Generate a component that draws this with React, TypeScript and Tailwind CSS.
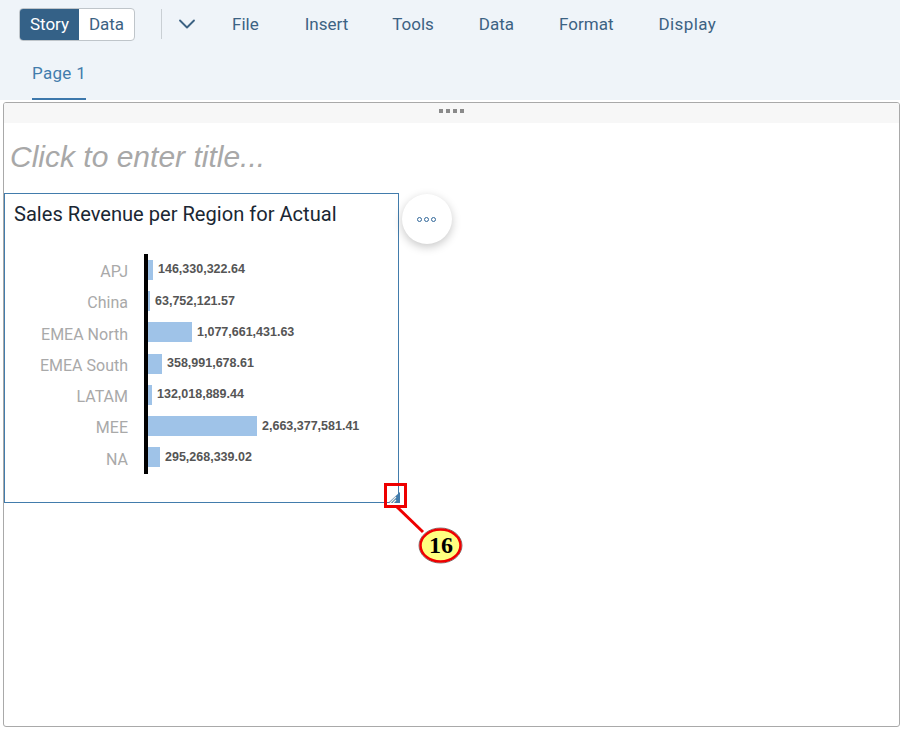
import React from 'react';
import { ChevronDown } from 'lucide-react';

const menuItems = [
  { label: 'File', cls: 'ml-[31px] pt-[2px]' },
  { label: 'Insert', cls: 'ml-[46px] pt-[2px]' },
  { label: 'Tools', cls: 'ml-[44px] pt-[2px]' },
  { label: 'Data', cls: 'ml-[45px] pt-[2px]' },
  { label: 'Format', cls: 'ml-[45px] pt-[2px]' },
  { label: 'Display', cls: 'ml-[45px] pt-[2px] tracking-[0.4px]' },
];

const rows = [
  { region: 'APJ', value: '146,330,322.64', width: 'w-[5px]' },
  { region: 'China', value: '63,752,121.57', width: 'w-[2px]' },
  { region: 'EMEA North', value: '1,077,661,431.63', width: 'w-[44px]' },
  { region: 'EMEA South', value: '358,991,678.61', width: 'w-[14px]' },
  { region: 'LATAM', value: '132,018,889.44', width: 'w-[4px]' },
  { region: 'MEE', value: '2,663,377,581.41', width: 'w-[109px]' },
  { region: 'NA', value: '295,268,339.02', width: 'w-[12px]' },
];

const App: React.FC = () => {
  return (
    <div className="relative h-[731px] w-[900px] overflow-hidden bg-white font-['Roboto',sans-serif]">
      {/* Toolbar */}
      <div className="h-[100px] bg-[#eff4f9]">
        <div className="flex h-[48px] items-center pl-[19px] text-[17px] text-[#3c6283]">
          <div className="flex h-[33px] w-[116px] overflow-hidden rounded-[4px] border border-[#bfc5ca] bg-white">
            <div className="flex w-[59px] items-center justify-center bg-[#346187] pt-[1px] text-white">Story</div>
            <div className="flex flex-1 items-center justify-center pt-[1px]">Data</div>
          </div>
          <div className="ml-[26px] h-[30px] w-px bg-[#c9cfd4]" />
          <ChevronDown className="ml-[11px] h-[28px] w-[28px]" strokeWidth={1.6} />
          {menuItems.map((m) => (
            <span key={m.label} className={m.cls}>{m.label}</span>
          ))}
        </div>
        <div className="ml-[32px] mt-[11px] h-[41px] w-[54px] border-b-[2px] border-[#3d78ac] pt-[1px] text-[17px] leading-[26px] tracking-[0.3px] whitespace-nowrap text-[#427cac]">
          Page 1
        </div>
      </div>

      {/* Canvas */}
      <div className="ml-[3px] mt-[2px] h-[625px] w-[897px] overflow-hidden rounded-[3px] border border-[#a9a9a9]">
        <div className="flex h-[20px] items-center justify-center gap-[3px] bg-[#f7f7f7] pb-[4px]">
          <span className="h-[4px] w-[4px] bg-[#8a8a8a]" />
          <span className="h-[4px] w-[4px] bg-[#8a8a8a]" />
          <span className="h-[4px] w-[4px] bg-[#8a8a8a]" />
          <span className="h-[4px] w-[4px] bg-[#8a8a8a]" />
        </div>
        <div className="pl-[6px] pt-[14px] font-['Liberation_Sans',sans-serif] text-[30px] italic leading-[40px] text-[#a8a8a8]">Click to enter title...</div>

        <div className="mt-[16px] flex items-start">
          {/* Chart widget */}
          <div className="h-[310px] w-[395px] border border-[#427cac] pl-[9px] pt-[7px]">
            <div className="text-[20.1px] leading-[26px] text-[#1a2733]">Sales Revenue per Region for Actual</div>
            <div className="mt-[27px] flex">
              <div className="flex h-[220px] w-[114px] flex-col pt-[2px] text-right text-[16px] leading-[31.3px] text-[#a9a9a9]">
                {rows.map((r) => (
                  <div key={r.region} className="whitespace-nowrap">{r.region}</div>
                ))}
              </div>
              <div className="ml-[16px] flex h-[220px] flex-col border-l-4 border-black">
                {rows.map((r) => (
                  <div key={r.region} className="flex h-[31.3px] shrink-0 items-center">
                    <div className={`h-[20px] bg-[#9fc3e8] ${r.width}`} />
                    <span className="ml-[5px] whitespace-nowrap font-['Liberation_Sans',sans-serif] text-[12.5px] font-bold text-[#555555]">
                      {r.value}
                    </span>
                  </div>
                ))}
              </div>
            </div>
          </div>

          {/* More button */}
          <div className="ml-[3px] mt-px flex h-[50px] w-[50px] items-center justify-center gap-[2px] rounded-full bg-white pr-[1px] shadow-[0_3px_10px_rgba(0,0,0,0.22)]">
            <span className="h-[5px] w-[5px] rounded-full border-[1.5px] border-[#33689a]" />
            <span className="h-[5px] w-[5px] rounded-full border-[1.5px] border-[#33689a]" />
            <span className="h-[5px] w-[5px] rounded-full border-[1.5px] border-[#33689a]" />
          </div>
        </div>
      </div>

      {/* Resize handle with callout */}
      <svg className="absolute left-[380px] top-[480px]" width="90" height="90" viewBox="0 0 90 90" fill="none">
        <path d="M8 23 L20 12 L20 23 Z" fill="#427cac" />
        <path d="M10 23 L16 17 M13 23 L16 20" stroke="#f4efe6" strokeWidth="1.2" />
        <rect x="5.5" y="4.5" width="20" height="22" stroke="#ee0000" strokeWidth="3" />
        <line x1="17" y1="27" x2="43" y2="52" stroke="#ee0000" strokeWidth="3" />
        <ellipse cx="60.5" cy="65.5" rx="21.5" ry="17.5" stroke="#555555" strokeWidth="0.8" />
        <ellipse cx="60.5" cy="65.5" rx="20" ry="16" fill="#ffff80" stroke="#ee0000" strokeWidth="2.5" />
      </svg>
      <span className="absolute left-[429px] top-[531px] font-['Liberation_Serif',serif] text-[24px] font-bold leading-[28px] text-black">16</span>
    </div>
  );
};

export default App;
